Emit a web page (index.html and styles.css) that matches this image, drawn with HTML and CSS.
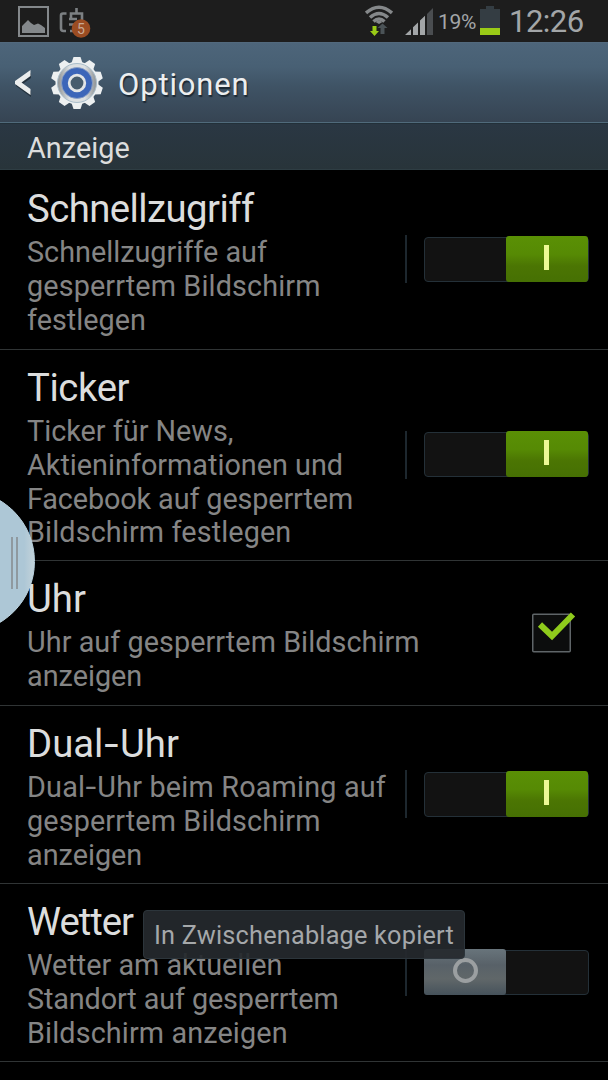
FILE: index.html
```html
<!DOCTYPE html>
<html lang="de">
<head>
<meta charset="utf-8">
<title>Optionen</title>
<link rel="stylesheet" href="styles.css">
</head>
<body>
<div class="phone">
  <header class="status">
    <div class="status-left">
      <svg class="icon-picture" width="31" height="31" viewBox="0 0 31 31"><rect x="1" y="1" width="29" height="29" fill="none" stroke="#84888b" stroke-width="2"/><path d="M4 27V20L7 17L10 14L13 17L16 19L20 17.500L23 19L27 22V27Z" fill="#84888b"/></svg>
      <svg class="icon-clip" width="34" height="32" viewBox="0 0 34 32"><g fill="none" stroke="#7c8083" stroke-width="2.600"><path d="M8.500 7.500H5Q3 7.500 3 9.500V22.500Q3 25 5.500 25H8"/><path d="M18.500 2V7M13 13V7.500H24V14M11 13H19M11 18.500H16M12 25H16"/></g><circle cx="23" cy="22.500" r="9.300" fill="#9b4c22"/><text x="23" y="27.500" class="badge-text" text-anchor="middle">5</text></svg>
    </div>
    <div class="status-right">
      <svg class="icon-wifi" width="28" height="32" viewBox="0 0 28 32"><g fill="none" stroke="#85888a" stroke-width="3.500"><path d="M1 8Q14 -3.500 27 8"/><path d="M5 12.500Q14 4.500 23 12.500"/><path d="M8.500 16.500Q14 11.500 19.500 16.500"/></g><path d="M10.500 17Q14 14.500 17.500 17L14 19Z" fill="#85888a"/><path d="M7.500 21H11.500V26H14L9.500 31L5 26H7.500Z" fill="#9acb17"/><path d="M15.500 29V23H12.500L17.500 18.500L22.500 23H19.500V29Z" fill="#4b5357"/></svg>
      <svg class="icon-signal" width="29" height="28" viewBox="0 0 29 28"><path d="M0 27L6 21.200V27ZM8 27V19.300L13 14.500V27ZM15 27V12.500L20 7.700V27Z" fill="#a3a6a8"/><path d="M22 27V6L28 0V27Z" fill="#4a4d50"/></svg>
      <span class="percent">19%</span>
      <svg class="icon-battery" width="20" height="30" viewBox="0 0 20 30"><path d="M6 0H14V3H20V29H0V3H6Z" fill="#343d43"/><path d="M0 22H20V29H0Z" fill="#9acb17"/></svg>
      <span class="clock">12:26</span>
    </div>
  </header>

  <nav class="titlebar">
    <svg class="back" width="19" height="28" viewBox="0 0 19 28"><path d="M17 4V9L8 15.500L17 22.500V28L2 17V13.500Z" fill="#24323e"/><path d="M16.500 1V7L7.500 13.500L16.500 20V26L1 15V12Z" fill="#eceeee"/></svg>
    <svg class="gear" width="54" height="54" viewBox="-27 -27 54 54">
      <defs><linearGradient id="metal"><stop offset="0" stop-color="#8c9092"/><stop offset=".3" stop-color="#dce0e2"/><stop offset=".7" stop-color="#dce0e2"/><stop offset="1" stop-color="#8c9092"/></linearGradient>
      <path id="tooth" d="M-5.500 -20L-3.500 -26H3.500L5.500 -20Z"/></defs>
      <g fill="#edf0f1"><circle r="21.500"/><use href="#tooth"/><use href="#tooth" transform="rotate(36)"/><use href="#tooth" transform="rotate(72)"/><use href="#tooth" transform="rotate(108)"/><use href="#tooth" transform="rotate(144)"/><use href="#tooth" transform="rotate(180)"/><use href="#tooth" transform="rotate(216)"/><use href="#tooth" transform="rotate(252)"/><use href="#tooth" transform="rotate(288)"/><use href="#tooth" transform="rotate(324)"/></g>
      <circle r="19.500" fill="url(#metal)" stroke="#a9bdca"/>
      <circle r="15.500" fill="#3c66b9" stroke="#8ea2c4" stroke-width=".8"/>
      <circle r="7.800" fill="#465c6d" stroke="#e2e5e6" stroke-width="2.800"/>
    </svg>
    <h1 class="title">Optionen</h1>
  </nav>
  <h2 class="section">Anzeige</h2>

  <main class="list">
    <section class="row row-first">
      <div class="copy"><h3 class="name tight">Schnellzugriff</h3><p class="desc">Schnellzugriffe auf<br><span class="open">gesperrtem Bildschirm</span><br>festlegen</p></div>
      <div class="control"><div class="switch on"><span class="thumb"><i class="bar"></i></span></div></div>
    </section>
    <section class="row row-tall">
      <div class="copy"><h3 class="name snug">Ticker</h3><p class="desc">Ticker für News,<br>Aktieninformationen und<br><span class="close">Facebook auf gesperrtem</span><br><span class="open">Bildschirm festlegen</span></p></div>
      <div class="control"><div class="switch on"><span class="thumb"><i class="bar"></i></span></div></div>
    </section>
    <section class="row row-short">
      <div class="copy"><h3 class="name">Uhr</h3><p class="desc"><span class="open-slight">Uhr auf gesperrtem Bildschirm</span><br>anzeigen</p></div>
      <svg class="check" width="44" height="41" viewBox="0 0 44 41"><rect x=".75" y="2.250" width="37.500" height="37.500" rx="1" fill="#0c0d0d" stroke="#5f6568" stroke-width="1.500"/><path d="M8 12.500L20 24L41 2.500" fill="none" stroke="#8fcb1c" stroke-width="6"/></svg>
    </section>
    <section class="row">
      <div class="copy"><h3 class="name">Dual<span class="dash-lg">-</span>Uhr</h3><p class="desc"><span class="open-wide">Dual<span class="dash">-</span>Uhr beim Roaming auf</span><br><span class="open">gesperrtem Bildschirm</span><br>anzeigen</p></div>
      <div class="control"><div class="switch on"><span class="thumb"><i class="bar"></i></span></div></div>
    </section>
    <section class="row">
      <div class="copy"><h3 class="name tighter">Wetter</h3><p class="desc">Wetter am aktuellen<br><span class="close">Standort auf gesperrtem</span><br><span class="open">Bildschirm anzeigen</span></p></div>
      <div class="control"><div class="switch"><span class="thumb"><i class="ring"></i></span></div></div>
    </section>
  </main>

  <div class="handle"><i class="grip"></i></div>
  <div class="toast">In Zwischenablage kopiert</div>
</div>
</body>
</html>
```
FILE: styles.css
```css
* { box-sizing: border-box; }
body { margin: 0; background: #000; font-family: Roboto, "Noto Sans", sans-serif; }
h1, h2, h3, p { margin: 0; font-weight: 400; white-space: nowrap; }
svg { display: block; flex: none; }
.phone { position: relative; width: 608px; height: 1080px; overflow: hidden; background: #000; }

.status { display: flex; justify-content: space-between; height: 42px; background: #1d1d1d; color: #a3a6a8; }
.status-left { display: flex; gap: 9px; padding: 6px 0 0 18px; }
.badge-text { font-size: 14px; fill: #c8a995; }
.status-right { display: flex; align-items: flex-start; padding-right: 24px; }
.icon-wifi { margin: 5px 12px 0 0; }
.icon-signal { margin: 8px 4px 0 0; }
.percent { width: 42px; font-size: 21px; line-height: 44px; letter-spacing: -.3px; white-space: nowrap; }
.icon-battery { margin-top: 6px; }
.clock { width: 75px; margin-left: 9px; font-size: 31px; line-height: 43px; letter-spacing: -.5px; white-space: nowrap; }

.titlebar { display: flex; align-items: center; height: 81px; padding-left: 14px; border-top: 1px solid #52697d; border-bottom: 1px solid #506a7b; background: linear-gradient(#4d657a, #486074 30%, #3f5365 55%, #364453); }
.gear { margin-left: 17px; }
.title { margin-left: 14px; padding-top: 4px; color: #eceeef; font-size: 31px; line-height: 38px; letter-spacing: .85px; text-shadow: 1px 2px 1px #1c2833; }
.section { height: 47px; padding: 0 0 0 27px; border-top: 1px solid #223039; border-bottom: 1px solid #2e3d43; background: linear-gradient(#2a3743, #28343a); color: #dcdddd; font-size: 28.800px; line-height: 48px; letter-spacing: .05px; }

.row { display: flex; justify-content: space-between; height: 178px; padding-right: 19px; border-bottom: 1px solid #303435; }
.row-first { height: 180px; }
.row-tall { height: 211px; }
.row-short { height: 145px; }
.copy { padding: 15px 0 0 27px; }
.row-first .copy { padding-top: 16px; }
.name { color: #dcdddd; font-size: 38.300px; line-height: 46px; }
.tight { letter-spacing: -.55px; }
.snug { letter-spacing: -.4px; }
.tighter { letter-spacing: -1px; }
.dash-lg { display: inline-block; transform: scaleX(1.35); margin: 0 3px; }
.dash { display: inline-block; transform: scaleX(1.35); margin: 0 2px; }
.open { letter-spacing: .12px; }
.open-slight { letter-spacing: .05px; }
.open-wide { letter-spacing: .18px; }
.close { letter-spacing: -.12px; }
.desc { padding-top: 4px; color: #858585; font-size: 28.800px; line-height: 33.800px; }
.control { display: flex; align-self: center; align-items: center; width: 184px; height: 48px; margin-bottom: 1px; padding-left: 17px; border-left: 2px solid #1d272e; }
.switch { display: flex; width: 165px; height: 45px; border: 1px solid #243038; border-radius: 4px; background: #121212; }
.switch.on { justify-content: flex-end; }
.thumb { display: flex; align-items: center; justify-content: center; width: 82px; height: 46px; margin: -2px 0 0 -1px; border-radius: 3px; background: linear-gradient(#68747b, #586168 35%, #606769 65%, #46525b); }
.on .thumb { margin: -2px 0 0 0; background: linear-gradient(#5a9005, #568a04 40%, #4b7503 65%, #467003); }
.bar { width: 5px; height: 25px; margin: -3px 1px 0 0; background: #edf995; }
.ring { width: 25px; height: 25px; margin-top: -3px; border: 4px solid #9b9fa1; border-radius: 50%; }
.check { align-self: center; margin: 0 13px 2px 0; }

.handle { position: absolute; left: -108px; top: 490px; width: 143px; height: 143px; border-radius: 50%; border: 1px solid #bad2df; background: linear-gradient(90deg, #adc7d6 93%, #c2d2da); }
.grip { position: absolute; left: 118px; top: 46px; width: 7px; height: 52px; border: solid #8f999f; border-width: 0 2px; }
.toast { position: absolute; left: 143px; top: 910px; width: 322px; height: 49px; padding-left: 10px; border: 1px solid #2c353b; border-radius: 4px; background: rgba(37, 41, 45, .93); color: #a5a8aa; font-size: 25.300px; line-height: 50px; letter-spacing: .2px; white-space: nowrap; }
```
